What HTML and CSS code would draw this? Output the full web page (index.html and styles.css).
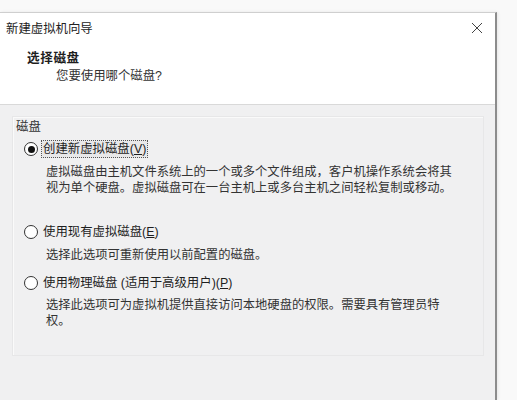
FILE: index.html
```html
<!DOCTYPE html>
<html lang="zh-CN">
<head>
    <meta charset="UTF-8">
    <title>新建虚拟机向导</title>
    <link rel="stylesheet" href="styles.css">
</head>
<body>

    <div class="wizard">
        <div class="title-bar">
            <span class="title">新建虚拟机向导</span>
            <span class="close-btn">
                <svg width="12" height="12" viewBox="0 0 12 12">
                    <path d="M1 1 L11 11 M11 1 L1 11" stroke="#444" stroke-width="1" fill="none"/>
                </svg>
            </span>
        </div>

        <!-- Step header -->
        <div class="step-header">
            <div class="step-title">选择磁盘</div>
            <div class="step-sub">您要使用哪个磁盘?</div>
        </div>

        <div class="wizard-body">
            <div class="group-box">
                <div class="group-label">磁盘</div>

                <div class="option">
                    <span class="radio checked"></span>
                    <span class="option-label focused">创建新虚拟磁盘(<u>V</u>)</span>
                </div>
                <div class="option-desc first">虚拟磁盘由主机文件系统上的一个或多个文件组成，客户机操作系统会将其<br>视为单个硬盘。虚拟磁盘可在一台主机上或多台主机之间轻松复制或移动。</div>

                <div class="option second">
                    <span class="radio"></span>
                    <span class="option-label">使用现有虚拟磁盘(<u>E</u>)</span>
                </div>
                <div class="option-desc">选择此选项可重新使用以前配置的磁盘。</div>

                <div class="option third">
                    <span class="radio"></span>
                    <span class="option-label">使用物理磁盘 (适用于高级用户)(<u>P</u>)</span>
                </div>
                <div class="option-desc last">选择此选项可为虚拟机提供直接访问本地硬盘的权限。需要具有管理员特<br>权。</div>
            </div>
        </div>
    </div>

</body>
</html>
```

FILE: styles.css
```css
* {
    margin: 0;
    padding: 0;
    box-sizing: border-box;
}

body {
    font-family: "Liberation Sans", "Noto Sans CJK SC", sans-serif;
    background-color: #f9f9f9;
    padding-top: 12px;
    height: 400px;
    overflow: hidden;
    color: #1e1e1e;
}

.wizard {
    width: 497px;
    height: 388px;
    background-color: #fff;
    border-top: 1px solid #cfcfcf;
    border-right: 2px solid #8c8c8c;
    box-shadow: 1px 0 3px rgba(0, 0, 0, 0.08);
    display: flex;
    flex-direction: column;
}

.title-bar {
    height: 29px;
    display: flex;
    align-items: center;
    justify-content: space-between;
    padding: 0 12px 0 6px;
}

.title {
    font-size: 12.4px;
    color: #222;
}

.close-btn {
    display: flex;
    align-items: center;
}

.step-header {
    height: 63px;
    padding-top: 7px;
    border-bottom: 1px solid #d9d9d9;
}

.step-title {
    font-size: 12.6px;
    font-weight: bold;
    line-height: 18px;
    padding-left: 27px;
    letter-spacing: 0.6px;
}

.step-sub {
    font-size: 12.4px;
    line-height: 18px;
    padding-left: 56px;
    color: #333;
}

.wizard-body {
    flex: 1;
    background-color: #f0f0f1;
    padding: 11px 11px 0 12px;
}

.group-box {
    border: 1px solid #e7e7e8;
    box-shadow: inset 1px 1px 0 #fafafa;
    padding: 1px 0 26px 3px;
}

.group-label {
    font-size: 12.4px;
    line-height: 18px;
    color: #333;
}

.option {
    display: flex;
    align-items: center;
    height: 20px;
    margin-top: 3px;
    padding-left: 8px;
}

.option.second {
    margin-top: 26px;
}

.option.third {
    margin-top: 10px;
}

.radio {
    width: 14px;
    height: 14px;
    border: 1px solid #333;
    border-radius: 50%;
    background-color: #fff;
    display: flex;
    align-items: center;
    justify-content: center;
    margin-right: 3px;
}

.radio.checked::after {
    content: "";
    width: 7px;
    height: 7px;
    border-radius: 50%;
    background-color: #111;
}

.option-label {
    font-size: 12.4px;
    line-height: 16px;
    padding: 0 1px;
    border: 1px dotted transparent;
}

.option-label.focused {
    border-color: #555;
    background-color: #e8e8e9;
}

.option-desc {
    font-size: 12.3px;
    line-height: 16px;
    padding-left: 30px;
    margin-top: 5px;
    color: #333;
}

.option-desc.last {
    margin-top: 4px;
}
```
